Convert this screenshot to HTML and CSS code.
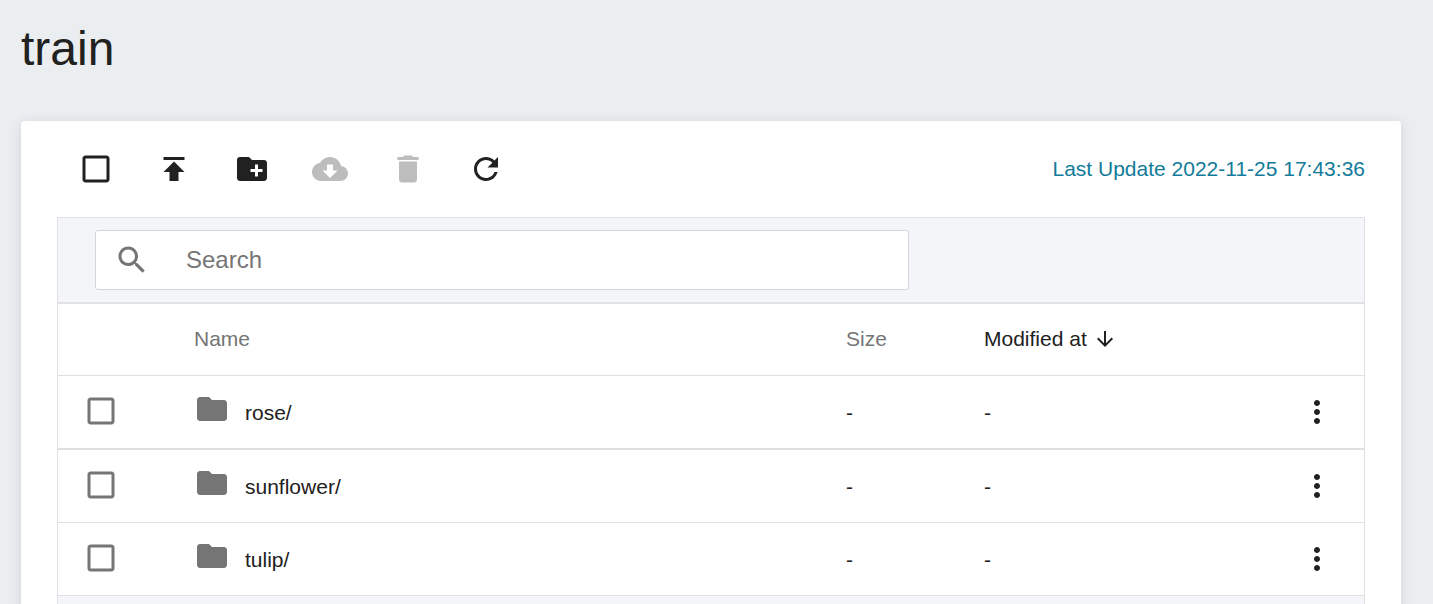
FILE: index.html
```html
<!DOCTYPE html>
<html lang="en">
<head>
<meta charset="utf-8">
<title>train</title>
<link rel="stylesheet" href="styles.css">
</head>
<body>
<svg class="sprite" aria-hidden="true">
  <symbol id="i-box" viewBox="0 0 24 24"><path d="M19 5v14H5V5h14m0-2H5c-1.1 0-2 .9-2 2v14c0 1.1.9 2 2 2h14c1.1 0 2-.9 2-2V5c0-1.1-.9-2-2-2z"/></symbol>
  <symbol id="i-folder" viewBox="0 0 24 24"><path d="M10 4H4c-1.1 0-1.99.9-1.99 2L2 18c0 1.1.9 2 2 2h16c1.1 0 2-.9 2-2V8c0-1.1-.9-2-2-2h-8l-2-2z"/></symbol>
  <symbol id="i-more" viewBox="0 0 24 24"><path d="M12 8c1.1 0 2-.9 2-2s-.9-2-2-2-2 .9-2 2 .9 2 2 2zm0 2c-1.1 0-2 .9-2 2s.9 2 2 2 2-.9 2-2-.9-2-2-2zm0 6c-1.1 0-2 .9-2 2s.9 2 2 2 2-.9 2-2-.9-2-2-2z"/></symbol>
</svg>
<h1 class="title">train</h1>
<main class="card">
  <div class="toolbar">
    <div class="actions">
      <span class="action"><svg class="icon-lg" viewBox="0 0 24 24"><use href="#i-box"/></svg></span>
      <span class="action"><svg class="icon-lg" viewBox="0 0 24 24"><path d="M5 4v2h14V4H5zm0 10h4v6h6v-6h4l-7-7-7 7z"/></svg></span>
      <span class="action"><svg class="icon-lg" viewBox="0 0 24 24"><path d="M20 6h-8l-2-2H4c-1.11 0-1.99.89-1.99 2L2 18c0 1.11.89 2 2 2h16c1.11 0 2-.89 2-2V8c0-1.11-.89-2-2-2zm-1 8h-3v3h-2v-3h-3v-2h3V9h2v3h3v2z"/></svg></span>
      <span class="action disabled"><svg class="icon-lg" viewBox="0 0 24 24"><path d="M19.35 10.04C18.67 6.59 15.64 4 12 4 9.11 4 6.6 5.64 5.35 8.04 2.34 8.36 0 10.91 0 14c0 3.31 2.69 6 6 6h13c2.76 0 5-2.24 5-5 0-2.64-2.05-4.78-4.65-4.96zM17 13l-5 5-5-5h3V9h4v4h3z"/></svg></span>
      <span class="action disabled"><svg class="icon-lg" viewBox="0 0 24 24"><path d="M6 19c0 1.1.9 2 2 2h8c1.1 0 2-.9 2-2V7H6v12zM19 4h-3.5l-1-1h-5l-1 1H5v2h14V4z"/></svg></span>
      <span class="action"><svg class="icon-lg" viewBox="0 0 24 24"><path d="M17.65 6.35C16.2 4.9 14.21 4 12 4c-4.42 0-7.99 3.58-7.99 8s3.57 8 7.99 8c3.73 0 6.84-2.55 7.73-6h-2.08c-.82 2.33-3.04 4-5.65 4-3.31 0-6-2.69-6-6s2.69-6 6-6c1.66 0 3.14.69 4.22 1.78L13 11h7V4l-2.35 2.35z"/></svg></span>
    </div>
    <div class="updated">Last Update 2022-11-25 17:43:36</div>
  </div>
  <section class="table">
    <div class="search-bar">
      <div class="search">
        <svg class="search-icon" viewBox="0 0 24 24"><path d="M15.5 14h-.79l-.28-.27C15.41 12.59 16 11.11 16 9.5 16 5.91 13.09 3 9.5 3S3 5.91 3 9.5 5.91 16 9.5 16c1.61 0 3.09-.59 4.23-1.57l.27.28v.79l5 4.99L20.49 19l-4.99-5zm-6 0C7.01 14 5 11.99 5 9.5S7.01 5 9.5 5 14 7.01 14 9.5 11.99 14 9.5 14z"/></svg>
        <span class="placeholder">Search</span>
      </div>
    </div>
    <div class="row head">
      <span></span>
      <span class="muted">Name</span>
      <span class="muted">Size</span>
      <span class="sorted">Modified at <svg class="sort-icon" viewBox="0 0 24 24"><path d="M20 12l-1.41-1.41L13 16.17V4h-2v12.17l-5.58-5.59L4 12l8 8 8-8z"/></svg></span>
      <span></span>
    </div>
    <div class="row item first">
      <svg class="check" viewBox="0 0 24 24"><use href="#i-box"/></svg>
      <span class="name"><svg class="folder" viewBox="0 0 24 24"><use href="#i-folder"/></svg><span class="label">rose/</span></span>
      <span class="cell">-</span>
      <span class="cell">-</span>
      <svg class="more" viewBox="0 0 24 24"><use href="#i-more"/></svg>
    </div>
    <div class="row item">
      <svg class="check" viewBox="0 0 24 24"><use href="#i-box"/></svg>
      <span class="name"><svg class="folder" viewBox="0 0 24 24"><use href="#i-folder"/></svg><span class="label">sunflower/</span></span>
      <span class="cell">-</span>
      <span class="cell">-</span>
      <svg class="more" viewBox="0 0 24 24"><use href="#i-more"/></svg>
    </div>
    <div class="row item">
      <svg class="check" viewBox="0 0 24 24"><use href="#i-box"/></svg>
      <span class="name"><svg class="folder" viewBox="0 0 24 24"><use href="#i-folder"/></svg><span class="label">tulip/</span></span>
      <span class="cell">-</span>
      <span class="cell">-</span>
      <svg class="more" viewBox="0 0 24 24"><use href="#i-more"/></svg>
    </div>
    <div class="table-foot"></div>
  </section>
</main>
</body>
</html>
```
FILE: styles.css
```css
html, body {
  margin: 0;
  height: 604px;
  overflow: hidden;
}
body {
  background: #ebeef1;
  color: #212121;
  font-family: "Liberation Sans", Arial, sans-serif;
}
.sprite {
  display: none;
}
.title {
  margin: 0;
  padding: 21px 0 0 21px;
  height: 121px;
  box-sizing: border-box;
  font-size: 48px;
  line-height: 55px;
  font-weight: 400;
}
.card {
  width: 1380px;
  margin-left: 21px;
  padding: 0 36px 36px;
  box-sizing: border-box;
  background: #fff;
  border-radius: 4px;
  box-shadow: 0 2px 12px rgba(60, 70, 80, 0.16);
}
.toolbar {
  height: 96px;
  display: flex;
  align-items: center;
  justify-content: space-between;
}
.actions {
  display: flex;
}
.action {
  width: 78px;
  display: flex;
  justify-content: center;
  fill: #212121;
}
.action.disabled {
  fill: #bdbdbd;
}
.icon-lg {
  width: 36px;
  height: 36px;
  display: block;
}
.updated {
  font-size: 21px;
  color: #127b99;
}
.table {
  border: 1px solid #e0e0e0;
  border-bottom: 0;
}
.search-bar {
  height: 86px;
  padding: 12px 0 0 37px;
  box-sizing: border-box;
  background: #f4f5f9;
  border-bottom: 2px solid #e2e2e2;
}
.search {
  width: 814px;
  height: 60px;
  box-sizing: border-box;
  display: flex;
  align-items: center;
  background: #fff;
  border: 1px solid #d6d6d6;
  border-radius: 3px;
}
.search-icon {
  width: 36px;
  height: 36px;
  margin-left: 18px;
  fill: #757575;
}
.placeholder {
  margin-left: 36px;
  font-size: 24px;
  color: #757575;
}
.row {
  display: grid;
  grid-template-columns: 136px 652px 138px 1fr 48px;
  align-items: center;
  border-bottom: 1px solid #e0e0e0;
  font-size: 21px;
}
.head {
  height: 72px;
  padding-bottom: 2px;
  box-sizing: border-box;
}
.item {
  height: 73px;
  box-sizing: border-box;
}
.item.first {
  height: 74px;
  border-bottom-width: 2px;
}
.muted {
  color: #757575;
}
.sorted {
  display: flex;
  align-items: center;
  white-space: pre;
}
.sort-icon {
  width: 24px;
  height: 24px;
  fill: #212121;
}
.check {
  width: 36px;
  height: 36px;
  margin: 0 0 2px 24.5px;
  fill: #757575;
}
.name {
  display: flex;
  align-items: center;
}
.folder {
  width: 36px;
  height: 36px;
  fill: #757575;
  margin-top: -6px;
}
.label {
  margin-left: 15px;
  padding-top: 2px;
}
.cell {
  padding-top: 2px;
}
.more {
  width: 36px;
  height: 36px;
  margin-left: -17px;
  fill: #212121;
}
.table-foot {
  height: 60px;
  background: #f4f5f9;
}
```
